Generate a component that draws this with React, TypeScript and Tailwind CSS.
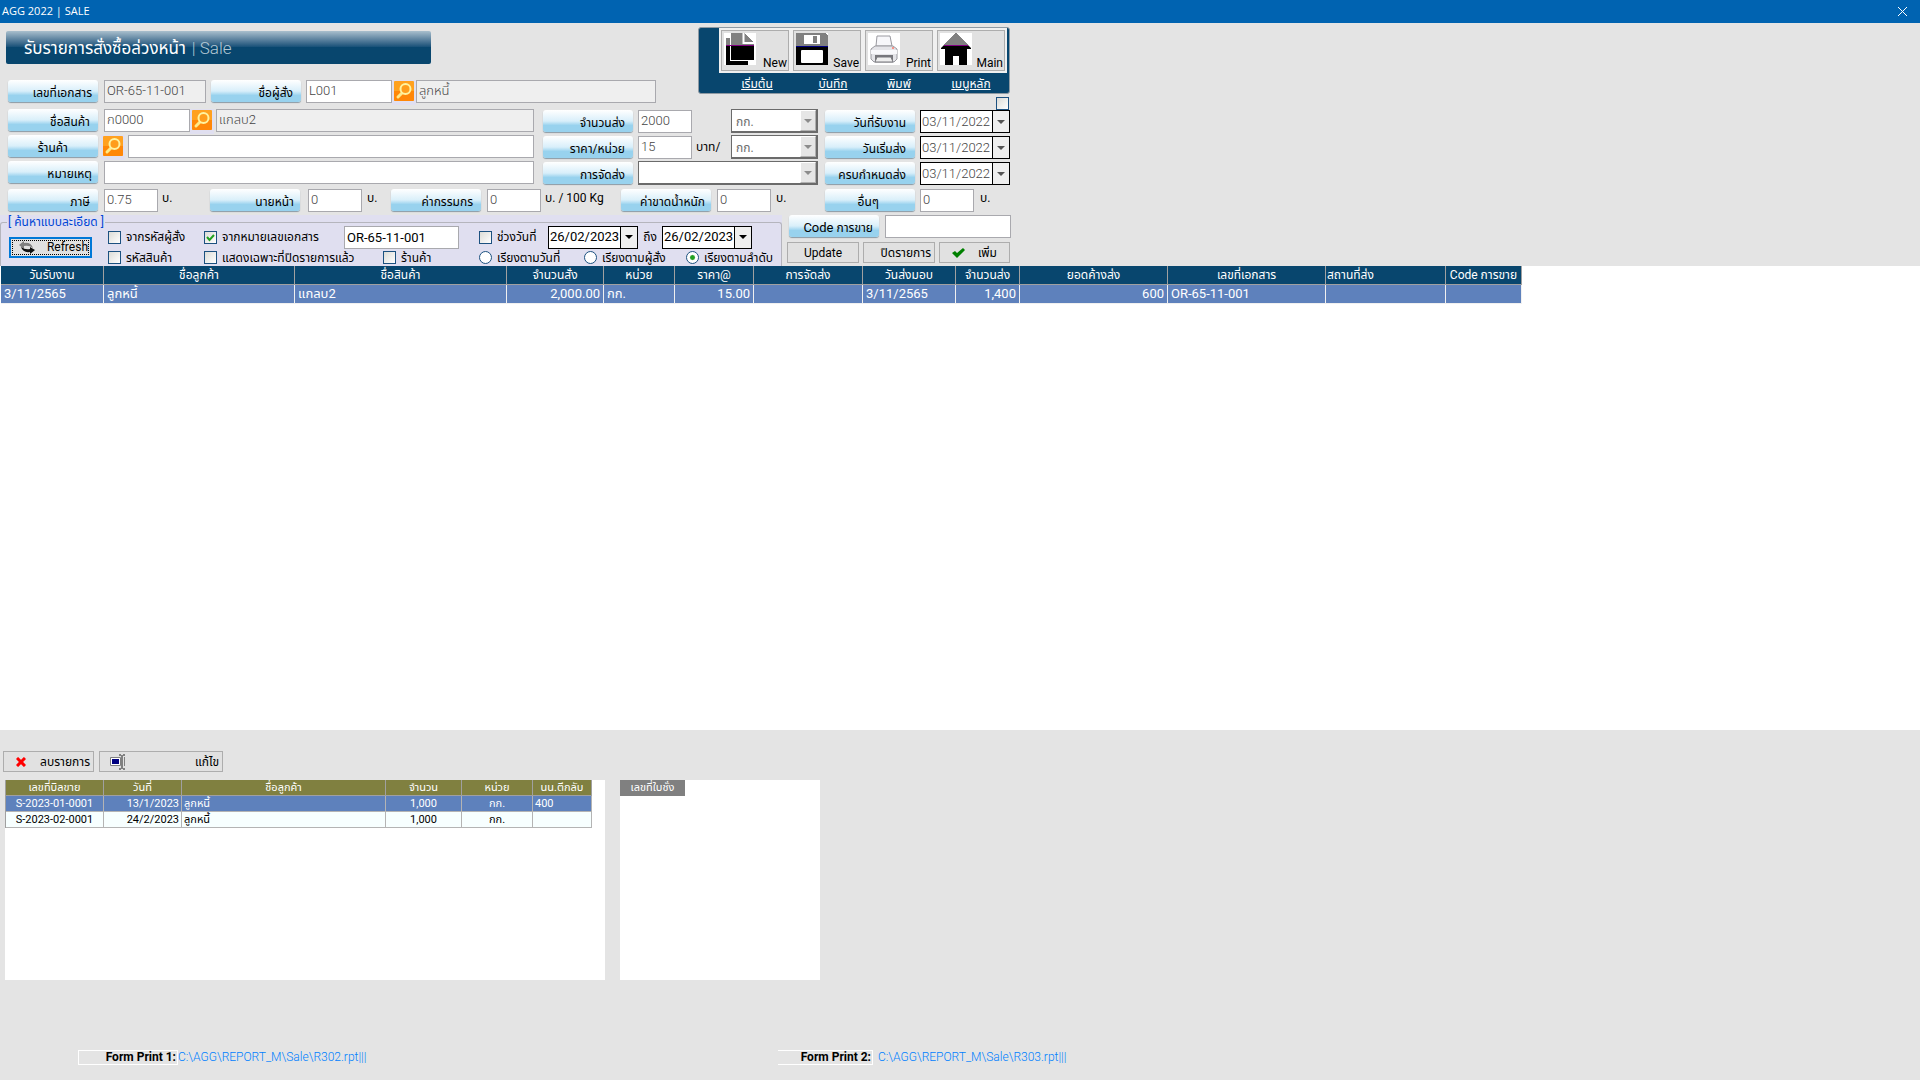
import type { ReactNode } from "react";
import { clsx } from "clsx";

type FieldProps = { id?: string; value?: string; label?: string; className?: string; shaded?: boolean };

function Caption({ htmlFor, children, className = "pr-[6px]" }: { htmlFor: string; children: ReactNode; className?: string }) {
  return (
    <label
      htmlFor={htmlFor}
      className={clsx(
        "flex h-[22px] w-[90px] shrink-0 items-end justify-end whitespace-nowrap rounded-[3px] bg-linear-to-b from-white via-[#d9effa] via-50% to-[#98d2ee] to-70% text-[12px] leading-[18px] text-black shadow-[0_1px_1px_#8a9aa5]",
        className,
      )}
    >
      {children}
    </label>
  );
}

function Field({ id, value = "", label, className, shaded }: FieldProps) {
  return (
    <input
      id={id}
      aria-label={label}
      defaultValue={value}
      className={clsx(
        "h-[23px] shrink-0 border border-[#a9a9ae] px-[2px] pb-[2px] text-[13px] font-light text-[#444] outline-none",
        shaded ? "bg-[#efefef]" : "bg-white",
        className,
      )}
    />
  );
}

function Arrow({ className }: { className?: string }) {
  return (
    <svg width="8" height="4" viewBox="0 0 8 4" className={className} fill="currentColor" aria-hidden="true">
      <path d="M0 0h8L4 4z" />
    </svg>
  );
}

function Unit({ id, value, label, className }: FieldProps) {
  return (
    <div className={clsx("flex h-[24px] shrink-0 border border-r-2 border-b-2 border-[#6b6b6b] bg-white", className)}>
      <select
        id={id}
        aria-label={label}
        defaultValue={value}
        disabled
        className="min-w-0 flex-1 appearance-none px-1 pt-[2px] text-[12px] text-[#6d6d6d] opacity-100 outline-none"
      >
        <option>{value}</option>
      </select>
      <span className="flex w-4 items-center justify-center border border-white border-r-[#b0b0b0] border-b-[#b0b0b0] bg-[#e6e6e6] text-[#8c8c8c]">
        <Arrow />
      </span>
    </div>
  );
}

function DateBox({ id, value, label, active }: FieldProps & { active?: boolean }) {
  return (
    <div className="flex h-[23px] w-[90px] shrink-0 border border-black bg-white">
      <input
        id={id}
        aria-label={label}
        defaultValue={value}
        className={clsx("w-[71px] pl-px text-[13px] outline-none", active ? "text-black" : "font-light text-[#444]")}
      />
      <button
        type="button"
        aria-label="เลือกวันที่"
        className={clsx(
          "flex flex-1 items-center justify-center border-l border-black bg-[#efefef]",
          active ? "text-black" : "text-[#555]",
        )}
      >
        <Arrow />
      </button>
    </div>
  );
}

function SearchButton() {
  return (
    <button type="button" aria-label="ค้นหา" className="flex h-[25px] w-[24px] shrink-0 items-start justify-center bg-[#e0dff0] pt-px">
      <svg width="20" height="20" viewBox="0 0 20 20" fill="none" aria-hidden="true">
        <rect width="20" height="20" rx="1" fill="#ffa11f" />
        <path d="M0 10h20v9l-1 1H1l-1-1z" fill="#ff8708" />
        <path d="M8 12l-4 4" stroke="#ffe98a" strokeWidth="3" strokeLinecap="round" />
        <circle cx="11.500" cy="8" r="5" stroke="#fff3a0" strokeWidth="2" fill="#ff9d1c" />
      </svg>
    </button>
  );
}

function Tick({ label, className, defaultChecked }: { label: string; className?: string; defaultChecked?: boolean }) {
  return (
    <label className={clsx("flex shrink-0 items-center gap-[5px] whitespace-nowrap", className)}>
      <span className="grid">
        <input
          type="checkbox"
          defaultChecked={defaultChecked}
          className="peer col-start-1 row-start-1 h-[13px] w-[13px] appearance-none border border-[#1c5180] bg-linear-to-br from-[#dcdcd7] to-white"
        />
        <svg
          viewBox="0 0 13 13"
          className="pointer-events-none invisible col-start-1 row-start-1 h-[13px] w-[13px] peer-checked:visible"
          fill="none"
          stroke="#21a121"
          strokeWidth="2"
        >
          <path d="M3 6l2.500 3L10 4" />
        </svg>
      </span>
      {label}
    </label>
  );
}

function Sort({ label, className, defaultChecked }: { label: string; className?: string; defaultChecked?: boolean }) {
  return (
    <label className={clsx("flex shrink-0 items-center gap-[5px] whitespace-nowrap", className)}>
      <input
        type="radio"
        name="sort"
        defaultChecked={defaultChecked}
        className="h-[13px] w-[13px] appearance-none rounded-full border border-[#1c5180] bg-white checked:bg-radial checked:from-[#21a121] checked:from-25% checked:to-white checked:to-40%"
      />
      {label}
    </label>
  );
}

function PlainButton({ children, className }: { children: ReactNode; className?: string }) {
  return (
    <button
      type="button"
      className={clsx(
        "flex h-[21px] shrink-0 items-center whitespace-nowrap border border-[#adadad] bg-[#e1e1e1] text-[12px] text-black",
        className,
      )}
    >
      {children}
    </button>
  );
}

const NewIcon = (
  <>
    <path d="M2 5h4v23h18v4H2z" fill="#000" />
    <path d="M2 5h4v8H2z" fill="#808080" />
    <path d="M7 0h13l10 10v17H7z" fill="#000" />
    <path d="M7 0h13l10 10v2H7z" fill="#808080" />
    <path d="M19.500 0v10H30" fill="none" stroke="#fff" strokeWidth="2" />
    <path d="M2 12.500h28" stroke="#800080" />
  </>
);

const SaveIcon = (
  <>
    <path d="M0 1l1-1h28l3 3v29H0z" fill="#000" />
    <path d="M0 1l1-1h28l3 3v10H0z" fill="#808080" />
    <path d="M8 2h16v9H8z" fill="#fff" />
    <path d="M17 3h4v7h-4z" fill="#808080" />
    <path d="M0 13.500h32" stroke="#000080" />
    <rect x="5" y="17" width="22" height="13" rx="1" fill="#fff" />
  </>
);

const PrintIcon = (
  <>
    <path d="M8 13L9 3h13l2 10z" fill="#f7f7fa" stroke="#9a9aa0" />
    <path d="M3 16l4-3h18l4 3v10l-3 3H6l-3-3z" fill="#e4e4e8" stroke="#9a9aa0" />
    <path d="M3 17h26v4H3z" fill="#f8f8fb" />
    <path d="M7 22h18v5H7z" fill="#77777c" />
    <path d="M9 24h14l2 5H7z" fill="#eee" stroke="#77777c" />
    <circle cx="25" cy="15" r="1" fill="#ff7a6a" />
  </>
);

const MainIcon = (
  <>
    <path d="M16 0L1 15v1h4v16h8v-9h6v9h8V16h4v-1z" fill="#000" />
    <path d="M16 0L4 12h24z" fill="#808080" />
    <path d="M4 12.500h24" stroke="#800080" />
  </>
);

const TOOLS = [
  { name: "New", link: "เริ่มต้น", icon: NewIcon, pad: "pl-1" },
  { name: "Save", link: "บันทึก", icon: SaveIcon, pad: "pl-3" },
  { name: "Print", link: "พิมพ์", icon: PrintIcon, pad: "" },
  { name: "Main", link: "เมนูหลัก", icon: MainIcon, pad: "" },
];

function Toolbar() {
  return (
    <div className="flex h-[67px] w-[312px] justify-end rounded-[3px] border border-[#8f9aa3] bg-[#08466e] pr-[2px]">
      {TOOLS.map((t) => (
        <div key={t.name} className="w-[72px]">
          <button type="button" className="flex h-[45px] w-full border-2 border-[#f0f0f0] bg-[#e1e1e1] text-[12px] leading-[14px] text-black">
            <span className="flex h-full w-full items-end justify-between border border-[#adadad] pr-px pl-[2px]">
              <svg viewBox="0 0 32 32" className="mb-[5px] h-8 w-8 shrink-0 bg-white" aria-hidden="true">
                {t.icon}
              </svg>
              {t.name}
            </span>
          </button>
          <a href="#" className={clsx("block text-center text-[12px] leading-[22px] text-white underline", t.pad)}>
            {t.link}
          </a>
        </div>
      ))}
    </div>
  );
}

const ORDER_COLUMNS = [
  { title: "วันรับงาน", value: "3/11/2565", width: "w-[103px]" },
  { title: "ชื่อลูกค้า", value: "ลูกหนี้", width: "w-[191px]" },
  { title: "ชื่อสินค้า", value: "แกลบ2", width: "w-[212px]" },
  { title: "จำนวนสั่ง", value: "2,000.00", width: "w-[97px]", align: "text-right" },
  { title: "หน่วย", value: "กก.", width: "w-[71px]" },
  { title: "ราคา@", value: "15.00", width: "w-[79px]", align: "text-right" },
  { title: "การจัดส่ง", value: "", width: "w-[109px]" },
  { title: "วันส่งมอบ", value: "3/11/2565", width: "w-[93px]" },
  { title: "จำนวนส่ง", value: "1,400", width: "w-[64px]", align: "text-right" },
  { title: "ยอดค้างส่ง", value: "600", width: "w-[148px]", align: "text-right" },
  { title: "เลขที่เอกสาร", value: "OR-65-11-001", width: "w-[158px]" },
  { title: "สถานที่ส่ง", value: "", width: "w-[120px]", head: "text-left" },
  { title: "Code การขาย", value: "", width: "w-[76px]" },
];

function OrderTable() {
  return (
    <table className="ml-px w-[1521px] table-fixed border-separate border-spacing-0 text-[13px] text-white">
      <thead>
        <tr className="h-[19px] bg-[#08466e] text-[12px] leading-[18px]">
          {ORDER_COLUMNS.map((c) => (
            <th
              key={c.title}
              className={clsx(
                "overflow-hidden whitespace-nowrap border-r border-b border-[#a0a0a0] px-px py-0 font-normal",
                c.width,
                c.head ?? "text-center",
              )}
            >
              {c.title}
            </th>
          ))}
        </tr>
      </thead>
      <tbody>
        <tr className="h-[19px] bg-[#5e81bc] leading-[18px]">
          {ORDER_COLUMNS.map((c) => (
            <td
              key={c.title}
              className={clsx("overflow-hidden whitespace-nowrap border-r border-b border-[#f0f0f0] px-[3px] py-0", c.align)}
            >
              {c.value}
            </td>
          ))}
        </tr>
      </tbody>
    </table>
  );
}

const BILL_COLUMNS = [
  { title: "เลขที่บิลขาย", width: "w-[98px]", align: "text-center" },
  { title: "วันที่", width: "w-[78px]", align: "text-right" },
  { title: "ชื่อลูกค้า", width: "w-[204px]", align: "text-left" },
  { title: "จำนวน", width: "w-[76px]", align: "text-center" },
  { title: "หน่วย", width: "w-[71px]", align: "text-center" },
  { title: "นน.ตีกลับ", width: "w-[59px]", align: "text-left" },
];

const BILLS = [
  ["S-2023-01-0001", "13/1/2023", "ลูกหนี้", "1,000", "กก.", "400"],
  ["S-2023-02-0001", "24/2/2023", "ลูกหนี้", "1,000", "กก.", ""],
];

function BillTable() {
  return (
    <table className="w-[587px] table-fixed border-separate border-spacing-0 border-l border-[#a0a0a0] text-[11px] leading-[15px]">
      <thead>
        <tr className="h-4 bg-[#808040] text-white">
          {BILL_COLUMNS.map((c) => (
            <th key={c.title} className={clsx("whitespace-nowrap border-r border-b border-[#a0a0a0] p-0 font-normal", c.width)}>
              {c.title}
            </th>
          ))}
        </tr>
      </thead>
      <tbody>
        {BILLS.map((row, i) => (
          <tr key={row[0]} className={clsx("h-4", i === 0 ? "bg-[#5e81bc] text-white" : "bg-[#f7ffff] text-black")}>
            {row.map((cell, j) => (
              <td key={j} className={clsx("whitespace-nowrap border-r border-b border-[#b4b4b4] px-[2px] py-0", BILL_COLUMNS[j].align)}>
                {cell}
              </td>
            ))}
          </tr>
        ))}
      </tbody>
    </table>
  );
}

function SearchPanel() {
  return (
    <div className="h-[51px] w-[782px] shrink-0 bg-[#e0dff0]">
      <fieldset className="h-[51px] rounded-t-[3px] border border-b-0 border-[#b5b5bd] text-[12px] text-black">
        <legend className="ml-[6px] px-px text-[12px] leading-[14px] whitespace-nowrap text-[#0046d5]">[ ค้นหาแบบละเอียด ]</legend>
        <div className="flex pl-2">
          <button
            type="button"
            className="mt-[8px] flex h-[21px] w-[83px] shrink-0 border-2 border-[#0078d7] bg-[#e1e1e1] p-px text-[12px] leading-[15px]"
          >
            <span className="flex h-full w-full items-center justify-between border border-dotted border-black pl-[6px]">
              <svg width="16" height="15" viewBox="0 0 16 15" aria-hidden="true">
                <path d="M0 5l5-4v2q7-1 9 5-4-3-9-2v3z" fill="#808080" />
                <path d="M16 10l-5 4v-2q-7 1-9-5 4 3 9 2V7z" fill="#111" />
              </svg>
              Refresh
            </span>
          </button>
          <div className="ml-4 flex flex-col">
            <div className="-mt-1 flex h-[24px] items-center">
              <Tick label="จากรหัสผู้สั่ง" className="w-[96px]" />
              <Tick label="จากหมายเลขเอกสาร" className="w-[140px]" defaultChecked />
              <input
                aria-label="หมายเลขเอกสาร"
                defaultValue="OR-65-11-001"
                className="h-[23px] w-[115px] border border-[#a9a9ae] bg-white px-[2px] text-[13px] outline-none"
              />
              <Tick label="ช่วงวันที่" className="ml-5 w-[69px]" />
              <DateBox label="จากวันที่" value="26/02/2023" active />
              <span className="w-6 text-center">ถึง</span>
              <DateBox label="ถึงวันที่" value="26/02/2023" active />
            </div>
            <div className="mt-px flex h-[15px] items-center">
              <Tick label="รหัสสินค้า" className="w-[96px]" />
              <Tick label="แสดงเฉพาะที่ปิดรายการแล้ว" className="w-[179px]" />
              <Tick label="ร้านค้า" className="w-[96px]" />
              <Sort label="เรียงตามวันที่" className="w-[105px]" />
              <Sort label="เรียงตามผู้สั่ง" className="w-[102px]" />
              <Sort label="เรียงตามลำดับ" defaultChecked />
            </div>
          </div>
        </div>
      </fieldset>
    </div>
  );
}

function FormPrint({ id, title, path, className }: { id: string; title: string; path: string; className?: string }) {
  return (
    <div className="flex items-center text-[12px]">
      <label
        htmlFor={id}
        className={clsx("flex h-[15px] items-center justify-end border border-white pr-px font-bold whitespace-nowrap", className)}
      >
        {title}
      </label>
      <input id={id} defaultValue={path} className="w-[240px] bg-transparent font-light text-[#0080ff] outline-none" />
    </div>
  );
}

export default function App() {
  return (
    <div className="flex min-h-screen flex-col bg-[#e4e4e4] font-['Roboto','Noto_Sans_Thai','Noto_Sans',sans-serif] text-[12px] text-black">
      <header className="flex h-[23px] shrink-0 items-center justify-between bg-[#0063b1] pr-3 pl-[2px] font-['Open_Sans','Noto_Sans',sans-serif] text-[11px] text-white">
        <span>AGG 2022 | SALE</span>
        <button type="button" aria-label="Close">
          <svg width="11" height="11" viewBox="0 0 11 11" stroke="currentColor" aria-hidden="true">
            <path d="M1 1l9 9M10 1l-9 9" />
          </svg>
        </button>
      </header>

      <div className="flex h-[86px] shrink-0">
        <div className="w-[698px] shrink-0 pt-2">
          <h1 className="ml-[6px] flex h-[33px] w-[425px] items-center rounded-[2px] bg-linear-to-b from-[#a9bfcd] from-0% via-[#0f4d75] via-50% to-[#08466e] to-50% pt-[2px] pl-[18px] text-[17px] whitespace-nowrap text-white">
            รับรายการสั่งซื้อล่วงหน้า
            <span className="pl-[6px] font-light text-[#b5c8d4]">| Sale</span>
          </h1>
          <div className="mt-4 flex h-[23px] pl-2">
            <Caption htmlFor="doc">เลขที่เอกสาร</Caption>
            <Field id="doc" value="OR-65-11-001" className="ml-[6px] w-[102px]" shaded />
            <Caption htmlFor="customer" className="ml-[5px] pr-2">ชื่อผู้สั่ง</Caption>
            <Field id="customer" value="L001" className="ml-[5px] w-[86px]" />
            <SearchButton />
            <Field label="ชื่อลูกค้า" value="ลูกหนี้" className="w-[240px]" shaded />
          </div>
        </div>
        <div className="flex flex-col items-end gap-[3px] pt-1">
          <Toolbar />
          <input
            type="checkbox"
            aria-label="เลือกวันที่รับงาน"
            className="mr-px h-[13px] w-[13px] shrink-0 appearance-none border border-[#1c5180] bg-linear-to-br from-[#dcdcd7] to-white"
          />
        </div>
      </div>

      <div className="flex h-[80px] shrink-0 pl-2">
        <div className="flex w-[535px] shrink-0 flex-col gap-[3px]">
          <div className="flex h-[23px]">
            <Caption htmlFor="product" className="pr-2">ชื่อสินค้า</Caption>
            <Field id="product" value="ก0000" className="ml-[6px] w-[86px]" />
            <SearchButton />
            <Field label="ชื่อสินค้า" value="แกลบ2" className="ml-[2px] w-[318px]" shaded />
          </div>
          <div className="flex h-[23px]">
            <Caption htmlFor="shop" className="pr-[30px]">ร้านค้า</Caption>
            <span className="ml-[3px] flex">
              <SearchButton />
            </span>
            <Field id="shop" className="ml-[3px] w-[406px]" />
          </div>
          <div className="flex h-[23px]">
            <Caption htmlFor="note">หมายเหตุ</Caption>
            <Field id="note" className="ml-[6px] w-[430px]" />
          </div>
        </div>

        <div className="flex w-[282px] shrink-0 flex-col gap-[2px]">
          <div className="flex h-[24px] items-center">
            <Caption htmlFor="qty" className="pr-2">จำนวนส่ง</Caption>
            <Field id="qty" value="2000" className="ml-[5px] w-[54px]" />
            <Unit label="หน่วย" value="กก." className="ml-[39px] w-[87px]" />
          </div>
          <div className="flex h-[24px] items-center">
            <Caption htmlFor="price" className="pr-2">ราคา/หน่วย</Caption>
            <Field id="price" value="15" className="ml-[5px] w-[54px]" />
            <span className="w-[39px] pl-1 whitespace-nowrap">บาท/</span>
            <Unit label="หน่วยราคา" value="กก." className="w-[87px]" />
          </div>
          <div className="flex h-[24px] items-center">
            <Caption htmlFor="ship" className="pr-2">การจัดส่ง</Caption>
            <Unit id="ship" value="" className="ml-[5px] w-[180px]" />
          </div>
        </div>

        <div className="flex flex-col gap-[3px] pt-px">
          <div className="flex gap-[5px]">
            <Caption htmlFor="received" className="pr-[9px]">วันที่รับงาน</Caption>
            <DateBox id="received" value="03/11/2022" />
          </div>
          <div className="flex gap-[5px]">
            <Caption htmlFor="start" className="pr-[9px]">วันเริ่มส่ง</Caption>
            <DateBox id="start" value="03/11/2022" />
          </div>
          <div className="flex gap-[5px]">
            <Caption htmlFor="due" className="pr-[9px]">ครบกำหนดส่ง</Caption>
            <DateBox id="due" value="03/11/2022" />
          </div>
        </div>
      </div>

      <div className="flex h-[26px] shrink-0 pl-2 whitespace-nowrap">
        <Caption htmlFor="tax" className="pr-2">ภาษี</Caption>
        <Field id="tax" value="0.75" className="ml-[6px] w-[54px]" />
        <span className="w-[52px] pl-1">บ.</span>
        <Caption htmlFor="broker">นายหน้า</Caption>
        <Field id="broker" value="0" className="ml-2 w-[54px]" />
        <span className="w-[29px] pl-[5px]">บ.</span>
        <Caption htmlFor="labour" className="pr-2">ค่ากรรมกร</Caption>
        <Field id="labour" value="0" className="ml-[6px] w-[54px]" />
        <span className="w-[80px] pl-1">บ. / 100 Kg</span>
        <Caption htmlFor="loss">ค่าขาดน้ำหนัก</Caption>
        <Field id="loss" value="0" className="ml-[6px] w-[54px]" />
        <span className="w-[54px] pl-[5px]">บ.</span>
        <Caption htmlFor="other" className="pr-9">อื่นๆ</Caption>
        <Field id="other" value="0" className="ml-[5px] w-[54px]" />
        <span className="pl-[6px]">บ.</span>
      </div>

      <div className="flex h-[51px] shrink-0">
        <SearchPanel />
        <div className="ml-[5px] flex flex-col gap-1">
          <div className="flex gap-[6px] pl-[2px]">
            <Caption htmlFor="code" className="gap-[3px] pr-[6px]">
              <span className="text-[13px]">Code</span> การขาย
            </Caption>
            <Field id="code" className="w-[126px]" />
          </div>
          <div className="flex gap-1">
            <PlainButton className="w-[72px] justify-center">Update</PlainButton>
            <PlainButton className="w-[72px] justify-end pr-[3px]">ปิดรายการ</PlainButton>
            <PlainButton className="w-[71px] justify-between pr-3 pl-3">
              <svg width="13" height="10" viewBox="0 0 13 10" aria-hidden="true">
                <path d="M0 5l3-2 2 2 6-5 2 2-8 8z" fill="#008000" />
              </svg>
              เพิ่ม
            </PlainButton>
          </div>
        </div>
      </div>

      <main className="flex-1 bg-white">
        <OrderTable />
      </main>

      <section className="h-[350px] shrink-0 pt-[21px]">
        <div className="flex gap-[5px] pl-[3px]">
          <PlainButton className="w-[91px] justify-between pr-[3px] pl-3">
            <svg width="10" height="10" viewBox="0 0 10 10" stroke="#f00" strokeWidth="3" aria-hidden="true">
              <path d="M1 1l8 8M9 1l-8 8" />
            </svg>
            ลบรายการ
          </PlainButton>
          <PlainButton className="w-[124px] justify-between pr-[3px] pl-[10px]">
            <svg width="16" height="16" viewBox="0 0 16 16" fill="none" aria-hidden="true">
              <path d="M.5 3.500h10v8H.5z" fill="#fff" stroke="#808080" />
              <path d="M2 5h7v5H2z" fill="#000080" />
              <path d="M9 1h2M13 1h2M9 15h2M13 15h2M12 1v14" stroke="#808080" strokeWidth="2" />
              <path d="M14.500 3v9" stroke="#808080" />
            </svg>
            แก้ไข
          </PlainButton>
        </div>
        <div className="mt-2 flex gap-[15px] pl-[5px]">
          <div className="h-[200px] w-[600px] bg-white">
            <BillTable />
          </div>
          <div className="h-[200px] w-[200px] bg-white">
            <table className="w-[65px] table-fixed text-[11px] leading-4 text-white">
              <thead>
                <tr className="h-4 bg-[#808080]">
                  <th className="p-0 font-normal whitespace-nowrap">เลขที่ใบชั่ง</th>
                </tr>
              </thead>
            </table>
          </div>
        </div>
        <div className="mt-[68px] flex gap-[360px] pl-[78px]">
          <FormPrint id="print1" title="Form Print 1:" path="C:\AGG\REPORT_M\Sale\R302.rpt|||" className="w-[100px]" />
          <FormPrint id="print2" title="Form Print 2:" path="C:\AGG\REPORT_M\Sale\R303.rpt|||" className="mr-[5px] w-[95px] border-l-0" />
        </div>
      </section>
    </div>
  );
}
